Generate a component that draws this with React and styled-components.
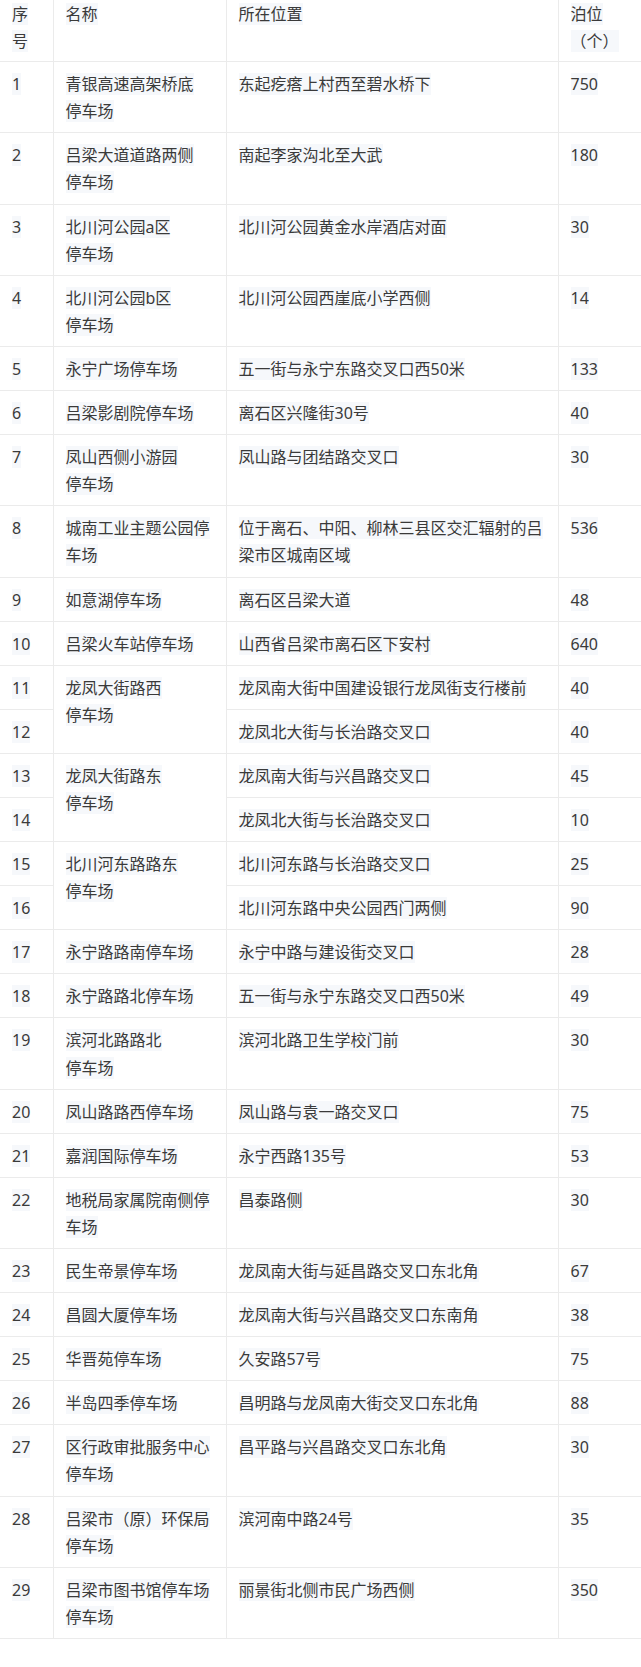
import React from "react";
import styled, { createGlobalStyle } from "styled-components";

const GlobalStyle = createGlobalStyle`
  html, body {
    margin: 0;
    padding: 0;
    background: #ffffff;
  }
  body {
    font-family: "Noto Sans", "Noto Sans CJK SC", sans-serif;
    color: #3a3a3a;
  }
`;

const Page = styled.div`
  width: 641px;
  height: 1667px;
  overflow: hidden;
  background: #fff;
`;

const Table = styled.table`
  width: 641px;
  table-layout: fixed;
  border-collapse: collapse;
  font-size: 16px;
  line-height: 27.1px;
`;

const Cell = styled.td`
  vertical-align: top;
  padding: 9px 12px 7px;
  border-bottom: 1px solid #ebebeb;
  border-left: ${(p) => (p.$first ? "none" : "1px solid #ebebeb")};
  word-break: break-all;
`;

const HeadCell = styled(Cell).attrs({ as: "th" })`
  font-weight: normal;
  text-align: left;
  padding: 1px 12px 6px;
`;

// faint band behind the text, as in the scan
const Txt = styled.span`
  background: #f6f8fb;
`;

const rows = [
  ["1", ["青银高速高架桥底", "停车场"], "东起疙瘩上村西至碧水桥下", "750"],
  ["2", ["吕梁大道道路两侧", "停车场"], "南起李家沟北至大武", "180"],
  ["3", ["北川河公园a区", "停车场"], "北川河公园黄金水岸酒店对面", "30"],
  ["4", ["北川河公园b区", "停车场"], "北川河公园西崖底小学西侧", "14"],
  ["5", ["永宁广场停车场"], "五一街与永宁东路交叉口西50米", "133"],
  ["6", ["吕梁影剧院停车场"], "离石区兴隆街30号", "40"],
  ["7", ["凤山西侧小游园", "停车场"], "凤山路与团结路交叉口", "30"],
  ["8", ["城南工业主题公园停车场"], "位于离石、中阳、柳林三县区交汇辐射的吕梁市区城南区域", "536"],
  ["9", ["如意湖停车场"], "离石区吕梁大道", "48"],
  ["10", ["吕梁火车站停车场"], "山西省吕梁市离石区下安村", "640"],
  ["11", ["龙凤大街路西", "停车场"], "龙凤南大街中国建设银行龙凤街支行楼前", "40", 2],
  ["12", null, "龙凤北大街与长治路交叉口", "40"],
  ["13", ["龙凤大街路东", "停车场"], "龙凤南大街与兴昌路交叉口", "45", 2],
  ["14", null, "龙凤北大街与长治路交叉口", "10"],
  ["15", ["北川河东路路东", "停车场"], "北川河东路与长治路交叉口", "25", 2],
  ["16", null, "北川河东路中央公园西门两侧", "90"],
  ["17", ["永宁路路南停车场"], "永宁中路与建设街交叉口", "28"],
  ["18", ["永宁路路北停车场"], "五一街与永宁东路交叉口西50米", "49"],
  ["19", ["滨河北路路北", "停车场"], "滨河北路卫生学校门前", "30"],
  ["20", ["凤山路路西停车场"], "凤山路与袁一路交叉口", "75"],
  ["21", ["嘉润国际停车场"], "永宁西路135号", "53"],
  ["22", ["地税局家属院南侧停车场"], "昌泰路侧", "30"],
  ["23", ["民生帝景停车场"], "龙凤南大街与延昌路交叉口东北角", "67"],
  ["24", ["昌圆大厦停车场"], "龙凤南大街与兴昌路交叉口东南角", "38"],
  ["25", ["华晋苑停车场"], "久安路57号", "75"],
  ["26", ["半岛四季停车场"], "昌明路与龙凤南大街交叉口东北角", "88"],
  ["27", ["区行政审批服务中心", "停车场"], "昌平路与兴昌路交叉口东北角", "30"],
  ["28", ["吕梁市（原）环保局", "停车场"], "滨河南中路24号", "35"],
  ["29", ["吕梁市图书馆停车场", "停车场"], "丽景街北侧市民广场西侧", "350"],
];

function Lines({ lines }) {
  return lines.map((l, i) => (
    <React.Fragment key={i}>
      {i > 0 && <br />}
      <Txt>{l}</Txt>
    </React.Fragment>
  ));
}

export default function App() {
  return (
    <Page>
      <GlobalStyle />
      <Table>
        <colgroup>
          <col style={{ width: 53 }} />
          <col style={{ width: 173 }} />
          <col style={{ width: 332 }} />
          <col style={{ width: 83 }} />
        </colgroup>
        <thead>
          <tr>
            <HeadCell $first>
              <Txt>序号</Txt>
            </HeadCell>
            <HeadCell>
              <Txt>名称</Txt>
            </HeadCell>
            <HeadCell>
              <Txt>所在位置</Txt>
            </HeadCell>
            <HeadCell>
              <Txt>泊位（个）</Txt>
            </HeadCell>
          </tr>
        </thead>
        <tbody>
          {rows.map(([no, name, place, count, span]) => (
            <tr key={no}>
              <Cell $first>
                <Txt>{no}</Txt>
              </Cell>
              {name && (
                <Cell rowSpan={span || 1}>
                  <Lines lines={name} />
                </Cell>
              )}
              <Cell>
                <Txt>{place}</Txt>
              </Cell>
              <Cell>
                <Txt>{count}</Txt>
              </Cell>
            </tr>
          ))}
        </tbody>
      </Table>
    </Page>
  );
}
